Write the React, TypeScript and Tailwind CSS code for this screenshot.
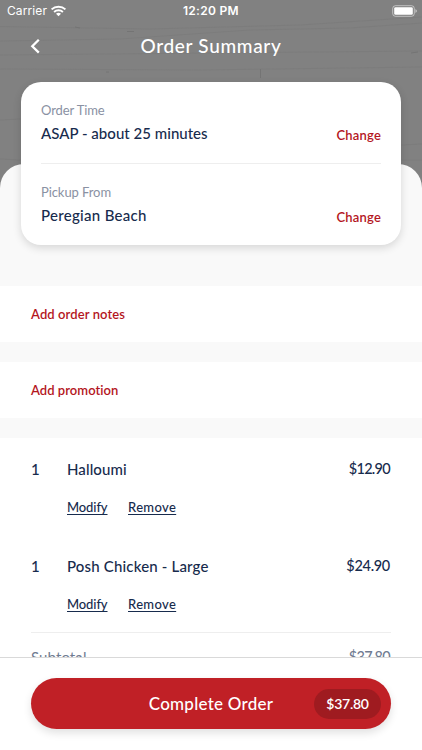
import React from 'react';

function BrickWall() {
  return (
    <svg className="absolute inset-0" width="422" height="200" fill="none" aria-hidden="true">
      <g stroke="#7b7b7b" strokeOpacity="0.7">
        <path d="M0 26.5 L150 29 L300 25 L422 17" />
        <path d="M0 41 L120 39 L250 30 L350 28 L422 23" />
        <path d="M0 55 L211 53 L422 51" />
        <path d="M0 69 L200 70 L422 67" />
        <path d="M0 120 L21 119 M0 159 L21 160 M401 145 L422 144 M401 160 L422 160" />
      </g>
      <path d="M75 27 l5 1 M127 31.5 l7 0 M411 53 l7 -1 M106 72 l3 0 M260.5 69 v9" stroke="#747474" />
    </svg>
  );
}

function StatusBar() {
  return (
    <div className="relative flex h-[22px] items-center px-[7px] font-['Inter',sans-serif] text-[12px] text-white">
      <span className="w-[43px] text-[12px] tracking-[0.1px]">Carrier</span>
      <svg className="mt-[-1px]" width="17" height="12" viewBox="0 0 17 12" fill="none" stroke="white">
        <path d="M1.6 4.4 C5.4 .7 11.6 .7 15.4 4.4" strokeWidth="2" />
        <path d="M4.1 7 C6.6 4.7 10.4 4.7 12.9 7" strokeWidth="1.9" />
        <path d="M8.5 11.2 L6 8.7 Q8.5 6.7 11 8.7Z" fill="white" stroke="none" />
      </svg>
      <span className="ml-[116px] text-[12px] font-semibold tracking-[0.28px] whitespace-nowrap">12:20 PM</span>
      <svg className="ml-auto mr-[-5px]" width="28" height="12" viewBox="0 0 28 12">
        <rect x=".7" y=".7" width="21.6" height="10.6" rx="2.8" fill="none" stroke="white" strokeOpacity=".5" />
        <rect x="2.2" y="2.2" width="18.6" height="7.6" rx="1.4" fill="white" />
        <path d="M23.4 4 Q25 5 25 6 Q25 7 23.4 8Z" fill="white" fillOpacity=".5" />
      </svg>
    </div>
  );
}

interface DetailProps {
  label: string;
  value: string;
  labelClass: string;
  valueClass: string;
}

function Detail({ label, value, labelClass, valueClass }: DetailProps) {
  return (
    <div className="flex h-[81px] items-start justify-between pt-[19px]">
      <div>
        <div className={`text-[13px] leading-[18px] text-[#8a91a3] ${labelClass}`}>{label}</div>
        <div className={`mt-[4px] text-[15px] leading-[20px] font-medium text-[#172b4d] ${valueClass}`}>{value}</div>
      </div>
      <button className="mt-[25px] text-[13px] leading-[18px] font-semibold tracking-[0.18px] text-[#b4161e]">Change</button>
    </div>
  );
}

interface ItemProps {
  name: string;
  price: string;
  nameClass: string;
  priceClass: string;
}

function Item({ name, price, nameClass, priceClass }: ItemProps) {
  return (
    <div className="h-[97px] text-[#172b4d]">
      <div className="flex pt-[21px] text-[15px] leading-[20px] font-medium">
        <span className="w-[36px]">1</span>
        <span className={nameClass}>{name}</span>
        <span className={`ml-auto ${priceClass}`}>{price}</span>
      </div>
      <div className="mt-[19px] ml-[36px] flex gap-[20.5px] text-[13px] leading-[18px] font-medium">
        <button className="tracking-[-0.1px] underline underline-offset-2">Modify</button>
        <button className="tracking-[0.35px] underline underline-offset-2">Remove</button>
      </div>
    </div>
  );
}

export default function App() {
  return (
    <main className="flex h-[750px] w-[422px] flex-col overflow-hidden bg-white font-['Lato',sans-serif]">
      <div className="relative h-[657px] shrink-0 overflow-hidden bg-[#818181]">
        <BrickWall />
        <StatusBar />
        <header className="relative flex h-[60px] justify-center pt-[12px] text-white">
          <svg className="absolute top-[16px] left-[29px]" width="12" height="16" viewBox="0 0 12 16" fill="none" stroke="white" strokeWidth="2.3">
            <path d="M9.8 1.8 L3.3 8.2 L9.8 14.6" />
          </svg>
          <h1 className="text-[19px] leading-[24px] font-medium tracking-[0.68px]">Order Summary</h1>
        </header>
        <section className="relative z-10 mx-[21px] h-[163px] rounded-[20px] bg-white px-[20px] shadow-[0_3px_9px_rgba(0,0,0,0.14)]">
          <Detail label="Order Time" value="ASAP - about 25 minutes" labelClass="tracking-[-0.1px]" valueClass="tracking-[0.02px]" />
          <div className="h-px bg-[#eeeeee]" />
          <Detail label="Pickup From" value="Peregian Beach" labelClass="tracking-[-0.08px]" valueClass="tracking-[0.3px]" />
        </section>
        <div className="relative -mt-[81px] rounded-t-[24px] bg-[#f9f9f9] pt-[122px]">
          <section className="flex h-[56px] items-center bg-white px-[31px] pt-[2px] text-[13px] font-semibold text-[#b4161e]">
            <button className="tracking-[0.1px]">Add order notes</button>
          </section>
          <section className="mt-[20px] flex h-[56px] items-center bg-white px-[31px] pt-[2px] text-[13px] font-semibold text-[#b4161e]">
            <button className="tracking-[0.04px]">Add promotion</button>
          </section>
          <section className="mt-[20px] h-[240px] bg-white px-[31px]">
            <Item name="Halloumi" price="$12.90" nameClass="tracking-[0.1px]" priceClass="text-[14.5px] mr-[1px] tracking-[-0.7px]" />
            <Item name="Posh Chicken - Large" price="$24.90" nameClass="tracking-[0.17px]" priceClass="text-[14.5px] mr-[1px] tracking-[-0.3px]" />
            <div className="flex justify-between border-t border-[#eeeeee] pt-[14px] text-[15px] leading-[20px] text-[#6f7b91]">
              <span className="tracking-[0.1px]">Subtotal</span>
              <span className="mr-[1px] text-[14.5px] font-medium tracking-[-0.7px]">$37.80</span>
            </div>
          </section>
        </div>
      </div>
      <footer className="h-[93px] border-t border-[#d9d9d9] bg-white px-[31px] pt-[20px]">
        <button className="relative flex h-[51px] w-[360px] items-center justify-center rounded-full bg-[#c02026] text-[17px] font-medium text-white shadow-[0_4px_9px_rgba(0,0,0,0.12)]">
          <span className="tracking-[0.25px]">Complete Order</span>
          <span className="absolute right-[10px] flex h-[30px] w-[67px] items-center justify-center rounded-full bg-[#9f1b20] text-[14px] font-semibold tracking-[-0.25px]">$37.80</span>
        </button>
      </footer>
    </main>
  );
}
